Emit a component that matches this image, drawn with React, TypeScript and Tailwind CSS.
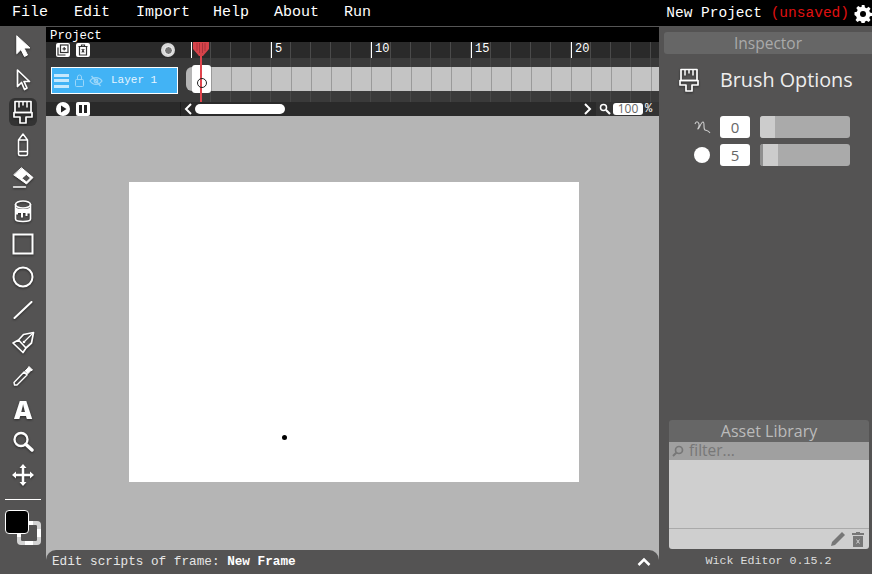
import type { ReactNode } from "react"

const mono = "font-['Liberation_Mono','DejaVu_Sans_Mono',monospace]"
const sans = "font-['Open_Sans','Noto_Sans',sans-serif]"

const menus = [
  { label: "File", w: "w-[62px]" },
  { label: "Edit", w: "w-[62px]" },
  { label: "Import", w: "w-[77px]" },
  { label: "Help", w: "w-[61px]" },
  { label: "About", w: "w-[70px]" },
  { label: "Run", w: "w-[30px]" },
]

function Ico({ children, size = 24 }: { children: ReactNode; size?: number }) {
  return (
    <svg width={size} height={size} viewBox="0 0 24 24" fill="none" stroke="white" strokeWidth={2} strokeLinejoin="round" strokeLinecap="round" className="drop-shadow-[0_1px_1px_rgba(0,0,0,0.5)]">
      {children}
    </svg>
  )
}

function BrushIcon({ size = 24 }: { size?: number }) {
  return (
    <Ico size={size}>
      <path d="M4 1.500h16v11H4z" strokeWidth={1.700} />
      <path d="M3 12.500h18v4.500h-6v6H9v-6H3z" strokeWidth={1.700} />
      <path d="M8 2v5M12 2v3M16 2v5" strokeWidth={1.500} />
    </Ico>
  )
}

const tools: ReactNode[] = [
  <Ico key="a"><path d="M6 2l13 12h-6l3.500 7-3 1.500-3.500-7L6 19.500z" fill="white" strokeWidth={1} /></Ico>,
  <Ico key="b"><path d="M6.500 3l12 11.500h-5.500l3 6.500-2.500 1.500-3-7-4 4z" strokeWidth={1.700} /></Ico>,
  <BrushIcon key="c" />,
  <Ico key="d"><path d="M7.500 7l4.500-6 4.500 6v14c0 1-1 1.500-1.500 1.500H9c-.5 0-1.500-.5-1.500-1.500zM7.500 7h9M7.500 18.500h9" strokeWidth={1.500} /></Ico>,
  <Ico key="e"><path d="M10.700 2L22 11.500 15.500 18 3 9z" fill="white" strokeWidth={1} /><path d="M15.500 8.500l4 3.500-4 4-4.500-3.500z" fill="#545353" stroke="white" strokeWidth={1} /><path d="M2.500 21h12" strokeWidth={1.400} /></Ico>,
  <Ico key="f"><ellipse cx="12" cy="5.500" rx="7.500" ry="3.500" strokeWidth={1.600} /><path d="M4.500 5.500V20c0 1.500 2.500 2.500 7.500 2.500s7.500-1 7.500-2.500V5.500" strokeWidth={1.600} /><path d="M5 8.500c3 2 11 2 14 0v6h-2.500v2.500h-2V14h-2.500v4.500h-2V14H7v1.500H5z" fill="white" stroke="none" /></Ico>,
  <Ico key="g"><rect x="2.500" y="2.500" width="19" height="19" strokeLinecap="butt" strokeLinejoin="miter" /></Ico>,
  <Ico key="h"><circle cx="12" cy="12" r="9.500" /></Ico>,
  <Ico key="i"><path d="M3.500 20L20.500 4" /></Ico>,
  <Ico key="j"><path d="M22.500 1.500l-2 10.500-5.500 5-7.500-8 5-5.500zM7.500 9l7.500 8-3 4.500L2 12z" strokeWidth={1.700} /><path d="M21.500 2.500l-8 8" strokeWidth={1.200} /><circle cx="13" cy="11" r="1.300" fill="white" stroke="none" /></Ico>,
  <Ico key="k"><path d="M3.500 21l-.5-2.500L13 8l3 3L6 21z" strokeWidth={1.400} /><path d="M14 7l3-3 1-1.500 3.500 3.500-2 1-3 3z" fill="white" strokeWidth={1} /></Ico>,
  <span key="l" className={`${sans} text-[25px] leading-6 font-extrabold text-white drop-shadow-[0_1px_1px_rgba(0,0,0,0.5)]`}>A</span>,
  <Ico key="m"><circle cx="10" cy="9.500" r="6.500" strokeWidth={2.300} /><path d="M15 14.500l6 5.500" strokeWidth={3.500} /></Ico>,
  <Ico key="n"><path d="M12 4v16M4 12h16" strokeWidth={2.500} /><path d="M12 1l3.500 4h-7zM12 23l3.500-4h-7zM1 12l4-3.500v7zM23 12l-4-3.500v7z" fill="white" stroke="none" /></Ico>,
]

function ToolBar() {
  return (
    <div className="flex w-[46px] shrink-0 flex-col items-center bg-[#545353] pt-[5px]">
      {tools.map((t, i) => (
        <div key={i} className={`mb-[5px] flex h-[28px] w-[28px] items-center justify-center rounded-md ${i === 2 ? "bg-[#333333]" : ""}`}>
          {t}
        </div>
      ))}
      <div className="mt-[5px] h-px w-[36px] bg-white" />
      <div className="relative mt-[10px] h-[36px] w-[36px]">
        <div className="absolute left-[12px] top-[11px] h-[24px] w-[24px] rounded-[4px] border-[4px] border-dashed border-[#d4d4d4] bg-white">
          <div className="h-full w-full rounded-[1px] bg-[#545353]" />
        </div>
        <div className="absolute left-0 top-0 h-[24px] w-[24px] rounded-[4px] border border-white bg-black" />
      </div>
    </div>
  )
}

function Cells({ count, line, className = "" }: { count: number; line: string; className?: string }) {
  return (
    <div className={`flex ${className}`}>
      {Array.from({ length: count }).map((_, i) => (
        <div key={i} className={`h-full w-[20px] shrink-0 border-r-[1px] ${line}`} />
      ))}
    </div>
  )
}

function Ruler() {
  return (
    <div className="relative h-[16px] flex-1 overflow-hidden">
      <Cells count={24} line="border-[#4a4a4a]" className="h-full" />
      {[0, 4, 9, 14, 19].map((n) => (
        <div key={n} className={`absolute top-0 h-full border-l border-white pl-[3px] text-[12px] leading-[15px] text-white ${mono}`} style={{ left: n * 20 }}>
          {n === 0 ? "" : n + 1}
        </div>
      ))}
    </div>
  )
}

function SmallBtn({ children }: { children: ReactNode }) {
  return <div className="flex h-[14px] w-[14px] items-center justify-center rounded-[2px] bg-white">{children}</div>
}

function Timeline() {
  return (
    <div className="relative shrink-0 bg-black">
      <div className={`h-[15px] pl-[4px] pt-px text-[12.300px] leading-[16px] text-white ${mono}`}>Project</div>
      {/* ruler */}
      <div className="flex h-[16px] bg-[#2a2a2a]">
        <div className="flex w-[145px] shrink-0 items-center pl-[10px]">
          <SmallBtn>
            <svg width="12" height="12" viewBox="0 0 12 12" fill="none" stroke="#333" strokeWidth="1.200"><rect x="3.500" y="1" width="7.500" height="7.500" /><path d="M1 3.500V11h7.500M7.200 3v3.500M5.500 4.800H9" /></svg>
          </SmallBtn>
          <div className="ml-[6px]">
            <SmallBtn>
              <svg width="12" height="12" viewBox="0 0 12 12" fill="none" stroke="#333" strokeWidth="1.200"><path d="M1.500 2.500h9M4.500 2.500V1h3v1.500M2.500 2.500V11h7V2.500M4.800 5l2.400 3.500M7.200 5L4.800 8.500" /></svg>
            </SmallBtn>
          </div>
          <div className="ml-[71px] flex h-[14px] w-[14px] items-center justify-center rounded-full bg-[#d8d8d8]">
            <div className="h-[9px] w-[9px] rounded-full border-[1.500px] border-white bg-[#777777]" />
          </div>
        </div>
        <Ruler />
      </div>
      {/* layers */}
      <div className="flex h-[44px] bg-[#3a3a3a]">
        <div className="flex w-[140px] shrink-0 pl-[5px] pt-[9px]">
          <div className="flex h-[27px] w-[127px] items-center border border-white bg-[#42b3f5] pl-[2px]">
            <div className="flex w-[15px] flex-col gap-[2.500px]">
              <div className="h-[3px] bg-[#c6e8fc]" />
              <div className="h-[3px] bg-[#c6e8fc]" />
              <div className="h-[3px] bg-[#c6e8fc]" />
            </div>
            <svg className="ml-[5px]" width="11" height="13" viewBox="0 0 11 13" fill="none" stroke="#9bd6f9" strokeWidth="1"><rect x="1.500" y="5.500" width="8" height="7" rx="1" /><path d="M3.500 5.500V3a2 2 0 014 0v2.500" /></svg>
            <svg className="ml-[4px]" width="14" height="12" viewBox="0 0 14 12" fill="none" stroke="#9bd6f9" strokeWidth="1.300"><path d="M1 6c3-4.500 9-4.500 12 0-3 4.500-9 4.500-12 0z" /><circle cx="7" cy="6" r="1.800" /><path d="M2.500 1l9 10" /></svg>
            <span className={`ml-[8px] text-[11px] text-[#e6f5ff] ${mono}`}>Layer 1</span>
          </div>
        </div>
        <div className="relative flex-1 overflow-hidden">
          <Cells count={24} line="border-[#474747]" className="absolute left-[5px] top-0 h-full" />
          <div className="absolute left-0 top-[9px] flex h-[24px]">
            <div className="w-[6px] rounded-l-[6px] bg-[#b5b5b5]" />
            <Cells count={24} line="border-[#9a9a9a]" className="h-full bg-[#c4c4c4]" />
          </div>
          <div className="absolute left-[6px] top-[7px] h-[28px] w-[19px] rounded-[3px] bg-white" />
        </div>
      </div>
      {/* play row */}
      <div className="flex h-[14px] bg-[#2a2a2a]">
        <div className="flex w-[135px] shrink-0 items-center gap-[6px] border-r border-[#1c1c1c] pl-[10px]">
          <svg width="14" height="14" viewBox="0 0 14 14"><circle cx="7" cy="7" r="7" fill="white" /><path d="M5 3.500l5.500 3.500L5 10.500z" fill="#222" /></svg>
          <SmallBtn>
            <div className="flex gap-[2px]">
              <div className="h-[8px] w-[3px] bg-[#222]" />
              <div className="h-[8px] w-[3px] bg-[#222]" />
            </div>
          </SmallBtn>
        </div>
        <div className="flex flex-1 items-center">
          <svg className="ml-[2px]" width="10" height="12" viewBox="0 0 10 12" fill="none" stroke="white" strokeWidth="2"><path d="M8 1L3 6l5 5" /></svg>
          <div className="ml-[2px] h-[10px] w-[90px] rounded-full bg-white" />
          <svg className="ml-[298px]" width="10" height="12" viewBox="0 0 10 12" fill="none" stroke="white" strokeWidth="2"><path d="M2 1l5 5-5 5" /></svg>
          <div className="ml-[3px] flex h-full flex-1 items-center bg-[#333333] pl-[3px]">
            <svg width="12" height="12" viewBox="0 0 12 12" fill="none" stroke="white"><circle cx="4.500" cy="4.500" r="3" strokeWidth="1.500" /><path d="M7 7l4 4" strokeWidth="2.200" /></svg>
            <div className={`ml-[2px] flex h-[12px] w-[30px] items-center justify-center rounded-[3px] bg-white text-[12px] text-[#666] ${sans}`}>100</div>
            <span className={`ml-[2px] text-[12px] text-white ${mono}`}>%</span>
          </div>
        </div>
      </div>
      {/* playhead */}
      <div className="absolute left-[147px] top-[15px] flex flex-col items-center">
        <svg width="16" height="60" viewBox="0 0 16 60">
          <path d="M7 12h2v48H7z" fill="#e0444c" />
          <path d="M0 0h16v7l-6 7H6L0 7z" fill="#d6434a" />
          <path d="M4 1v8M6.500 1v10M9.500 1v10M12 1v8" stroke="#a8323a" strokeWidth="1" />
        </svg>
      </div>
      <div className="absolute left-[151px] top-[51px] h-[10px] w-[10px] rounded-full border-[1.500px] border-[#222]" />
    </div>
  )
}

function Slider({ from, to, dark }: { from: number; to: number; dark?: boolean }) {
  return (
    <div className="flex h-[22px] w-[90px] overflow-hidden rounded-[3px] bg-[#aaaaaa]">
      <div className={dark ? "bg-[#8f8f8f]" : ""} style={{ width: from }} />
      <div className="bg-[#cccccc]" style={{ width: to - from }} />
    </div>
  )
}

function NumBox({ value }: { value: string }) {
  return (
    <div className={`flex h-[22px] w-[30px] items-center justify-center rounded-[3px] bg-white text-[15px] text-[#666] ${sans}`}>
      {value}
    </div>
  )
}

function Inspector() {
  return (
    <div className="flex w-[213px] shrink-0 flex-col bg-[#545353]">
      <div className={`ml-[5px] mt-[5px] flex h-[22px] items-center justify-center rounded-l-[3px] bg-[#666666] pt-[2px] text-[15.500px] text-[#aaaaaa] ${sans}`}>
        Inspector
      </div>
      <div className="mt-[12px] flex items-center pl-[18px]">
        <BrushIcon size={24} />
        <span className={`ml-[19px] text-[19.800px] leading-[28px] text-[#eeeeee] ${sans}`}>Brush Options</span>
      </div>
      <div className="mt-[22px] flex items-center pl-[35px]">
        <svg width="18" height="16" viewBox="0 0 18 16" fill="none" stroke="#cccccc" strokeWidth="1.100"><path d="M1 5c1-3 3-3 4 0s-2 5-1 5 3-7 5-7 0 7 2 8 3 0 5 3" /></svg>
        <div className="ml-[8px]"><NumBox value="0" /></div>
        <div className="ml-[10px]"><Slider from={0} to={15} /></div>
      </div>
      <div className="mt-[6px] flex items-center pl-[35px]">
        <div className="h-[16px] w-[16px] rounded-full bg-white" />
        <div className="ml-[10px]"><NumBox value="5" /></div>
        <div className="ml-[10px]"><Slider from={3} to={18} dark /></div>
      </div>
      <div className="mx-[3px] ml-[10px] mt-auto flex h-[129px] flex-col overflow-hidden rounded-[3px]">
        <div className={`flex h-[22px] shrink-0 items-center justify-center bg-[#666666] text-[16px] text-[#bbbbbb] ${sans}`}>Asset Library</div>
        <div className={`flex h-[18px] shrink-0 items-center bg-[#a0a0a0] pl-[3px] text-[15.500px] text-[#777777] ${sans}`}>
          <svg width="12" height="12" viewBox="0 0 12 12" fill="none" stroke="#777777"><circle cx="7" cy="5" r="3.500" strokeWidth="1.700" /><path d="M4.500 7.500L1 11" strokeWidth="2" /></svg>
          <span className="ml-[5px]">filter...</span>
        </div>
        <div className="flex-1 border-b border-[#aaaaaa] bg-[#cfcfcf]" />
        <div className="flex h-[20px] shrink-0 items-center justify-end gap-[6px] bg-[#cfcfcf] pr-[5px]">
          <svg width="16" height="16" viewBox="0 0 16 16" fill="#777777"><path d="M12 1l3 3-10 10-4 1 1-4z" /></svg>
          <svg width="12" height="16" viewBox="0 0 12 16" fill="#777777"><path d="M0 2h4V1h4v1h4v2H0zM1 5h10v11H1z" /><path d="M4.500 8.500l3 4M7.500 8.500l-3 4" stroke="#cfcfcf" strokeWidth="1" /></svg>
        </div>
      </div>
      <div className={`flex h-[25px] shrink-0 items-center justify-center pl-[6px] text-[11.700px] text-[#dddddd] ${mono}`}>Wick Editor 0.15.2</div>
    </div>
  )
}

export default function App() {
  return (
    <div className="flex h-[574px] w-[872px] flex-col overflow-hidden bg-black">
      <div className={`flex h-[27px] shrink-0 items-center border-b border-[#555555] pl-[12px] pt-px text-[15px] text-white ${mono}`}>
        {menus.map((m) => (
          <div key={m.label} className={m.w}>{m.label}</div>
        ))}
        <div className="ml-auto text-[14.500px]">
          New Project <span className="text-[#e01010]">(unsaved)</span>
        </div>
        <svg className="ml-[5px]" width="18" height="18" viewBox="0 0 18 18">
          <path d="M7.500 0h3l.5 2.500 1.800.8 2.100-1.400 2 2.100-1.400 2.100.8 1.800 2.500.5v3l-2.500.5-.8 1.800 1.400 2.100-2 2.100-2.100-1.400-1.800.8-.5 2.500h-3l-.5-2.500-1.800-.8-2.100 1.400-2-2.100 1.400-2.100-.8-1.800L0 10.500v-3l2.500-.5.8-1.800-1.400-2.100 2-2.100 2.100 1.400 1.800-.8z" fill="white" transform="translate(.5 0) scale(.95)" />
          <circle cx="9" cy="9" r="3" fill="black" />
        </svg>
      </div>
      <div className="flex flex-1">
        <ToolBar />
        <div className="flex w-[613px] shrink-0 flex-col bg-[#b5b5b5]">
          <Timeline />
          <div className="flex-1 pl-[83px] pt-[66px]">
            <div className="relative h-[300px] w-[450px] bg-white">
              <div className="absolute left-[153px] top-[253px] h-[5px] w-[5px] rounded-full bg-black" />
            </div>
          </div>
          <div className={`flex h-[24px] shrink-0 items-center rounded-t-[10px] bg-[#545353] pl-[6px] pr-[8px] text-[12.700px] text-[#e6e6e6] ${mono}`}>
            <span className="whitespace-pre">Edit scripts of frame: </span>
            <span className="font-bold text-white">New Frame</span>
            <svg className="ml-auto" width="14" height="10" viewBox="0 0 14 10" fill="none" stroke="white" strokeWidth="2.500"><path d="M1.500 8L7 2.500 12.500 8" /></svg>
          </div>
        </div>
        <Inspector />
      </div>
    </div>
  )
}
